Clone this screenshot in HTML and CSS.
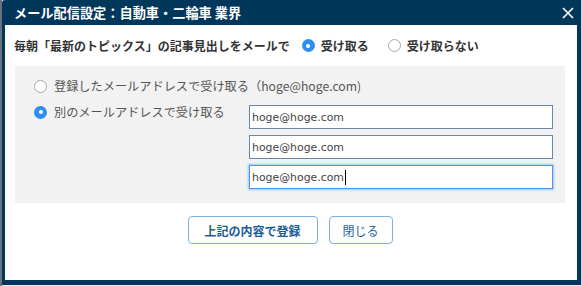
FILE: index.html
```html
<!DOCTYPE html>
<html lang="ja">
<head>
<meta charset="utf-8">
<title>メール配信設定</title>
<link rel="stylesheet" href="styles.css">
</head>
<body>
<div class="page">
  <div class="dialog">
    <div class="titlebar">
      <span class="title">メール配信設定：自動車・二輪車 業界</span>
      <span class="close" aria-label="閉じる">
        <svg width="12" height="12" viewBox="0 0 12 12"><path d="M1 1 L11 11 M11 1 L1 11" stroke="#fff" stroke-width="1.6" fill="none"/></svg>
      </span>
    </div>
    <div class="content">
      <div class="question">
        <span class="qtext">毎朝「最新のトピックス」の記事見出しをメールで</span>
        <label class="opt"><span class="radio checked"></span>受け取る</label>
        <label class="opt"><span class="radio"></span>受け取らない</label>
      </div>
      <div class="panel">
        <div class="row1">
          <span class="radio"></span>
          <span class="label">登録したメールアドレスで受け取る（hoge@hoge.com)</span>
        </div>
        <div class="row2">
          <div class="row2-label">
            <span class="radio checked"></span>
            <span class="label">別のメールアドレスで受け取る</span>
          </div>
          <div class="inputs">
            <div class="input">hoge@hoge.com</div>
            <div class="input">hoge@hoge.com</div>
            <div class="input focus">hoge@hoge.com<span class="caret"></span></div>
          </div>
        </div>
      </div>
      <div class="buttons">
        <button class="btn primary">上記の内容で登録</button>
        <button class="btn">閉じる</button>
      </div>
    </div>
  </div>
</div>
</body>
</html>
```
FILE: styles.css
```css
html, body {
  margin: 0;
  padding: 0;
  background: #e9ecef;
  font-family: "Noto Sans CJK JP", "Noto Sans", sans-serif;
}
.page {
  width: 579px;
  height: 286px;
  border-left: 2px solid #6a737b;
}
.dialog {
  width: 579px;
  height: 285px;
  background: #01375b;
  border-top-left-radius: 3px;
  display: flex;
  flex-direction: column;
}
.titlebar {
  height: 25px;
  display: flex;
  align-items: center;
  justify-content: space-between;
  padding: 0 7px 0 12px;
}
.title {
  color: #fff;
  font-size: 13.2px;
  font-weight: bold;
  line-height: 25px;
}
.close {
  display: flex;
  width: 12px;
  height: 12px;
  margin-top: 1px;
}
.content {
  flex: 1;
  background: #fff;
  margin: 0 4px 5px 3px;
  padding: 12px 12px 0 9px;
}
.question {
  display: flex;
  align-items: center;
  height: 17px;
  font-size: 12px;
  font-weight: bold;
  color: #333;
}
.qtext {
  margin-right: 12px;
}
.opt {
  display: flex;
  align-items: center;
  margin-right: 19px;
}
.opt .radio {
  margin-right: 6px;
}
.radio {
  box-sizing: border-box;
  width: 13px;
  height: 13px;
  border-radius: 50%;
  border: 1px solid #a9a9a9;
  background: #fff;
  flex: none;
  position: relative;
}
.radio.checked {
  border: none;
  background: #2f8ef0;
}
.radio.checked::after {
  content: "";
  position: absolute;
  left: 4.5px;
  top: 4.5px;
  width: 4px;
  height: 4px;
  border-radius: 50%;
  background: #fff;
}
.panel {
  margin: 12px 0 0 1px;
  background: #f2f2f2;
  padding: 12px 12px 14px 19px;
}
.row1 {
  display: flex;
  align-items: center;
  height: 16px;
}
.label {
  font-size: 12.2px;
  color: #555;
  margin-left: 7px;
  line-height: 16px;
}
.row2 {
  display: flex;
  margin-top: 10px;
}
.row2-label {
  display: flex;
  align-items: center;
  height: 16px;
  width: 215px;
  flex: none;
}
.inputs {
  display: flex;
  flex-direction: column;
  gap: 6px;
  margin-top: 1px;
}
.input {
  box-sizing: border-box;
  width: 304px;
  height: 24px;
  border: 1px solid #6a88a6;
  background: #fff;
  font-family: "DejaVu Sans", sans-serif;
  font-size: 10.9px;
  color: #444;
  padding-left: 2px;
  display: flex;
  align-items: center;
}
.input.focus {
  border: 1px solid #4c97ec;
  box-shadow: 0 0 2px 1px #9cc8f5;
}
.caret {
  display: inline-block;
  width: 1px;
  height: 15px;
  background: #000;
  margin-left: 1px;
}
.buttons {
  display: flex;
  justify-content: center;
  gap: 11px;
  margin-top: 13px;
  padding-left: 1px;
}
.btn {
  height: 28px;
  border: 1px solid #7db0de;
  border-radius: 4px;
  background: #fff;
  font-family: "Noto Sans CJK JP", sans-serif;
  font-size: 12px;
  color: #1f66a8;
  padding: 0;
}
.btn.primary {
  width: 130px;
  font-weight: bold;
  color: #1a5c9c;
}
.btn:not(.primary) {
  width: 64px;
}
```
